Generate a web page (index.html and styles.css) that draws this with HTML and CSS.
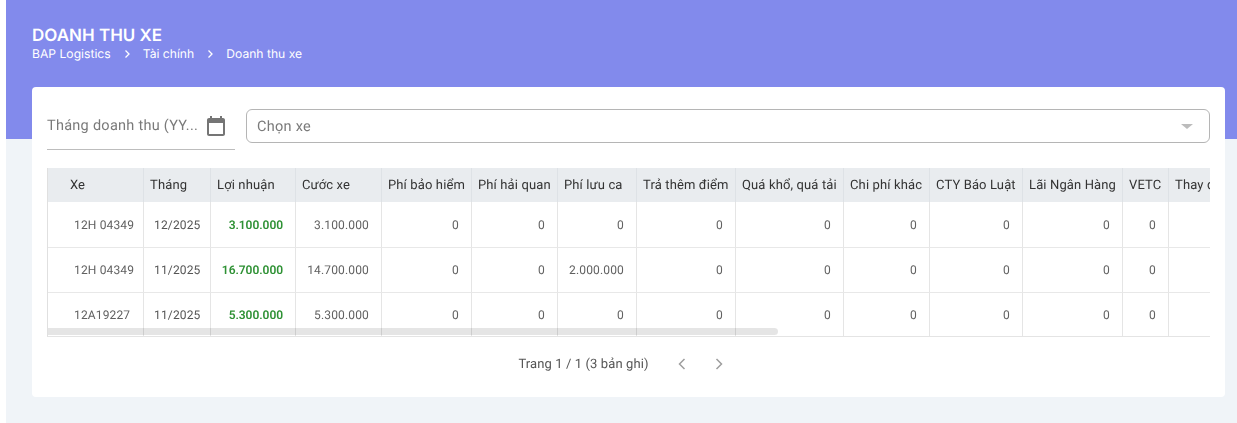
FILE: index.html
```html
<!DOCTYPE html>
<html lang="vi">
<head>
<meta charset="utf-8">
<title>Doanh thu xe</title>
<link rel="stylesheet" href="styles.css">
</head>
<body>
<div class="banner">
  <h1 class="title">DOANH THU XE</h1>
  <nav class="crumbs">
    <span>BAP Logistics</span>
    <svg class="crumb-sep" viewBox="0 0 8 10"><path d="M2.5 1.5 6 5 2.5 8.500" fill="none" stroke="#fff" stroke-width="1.3"/></svg>
    <span>Tài chính</span>
    <svg class="crumb-sep" viewBox="0 0 8 10"><path d="M2.5 1.5 6 5 2.5 8.500" fill="none" stroke="#fff" stroke-width="1.3"/></svg>
    <span>Doanh thu xe</span>
  </nav>
</div>
<main class="card">
  <div class="filters">
    <div class="date-field">
      <span class="date-label">Tháng doanh thu (YY...</span>
      <svg class="cal" viewBox="0 0 24 24"><path fill="#757575" d="M19 3h-1V1h-2v2H8V1H6v2H5c-1.100 0-2 .9-2 2v14c0 1.100.9 2 2 2h14c1.100 0 2-.9 2-2V5c0-1.100-.9-2-2-2zm0 16H5V8h14v11z"/></svg>
    </div>
    <div class="select-field">
      <span class="select-label">Chọn xe</span>
      <span class="select-caret"></span>
    </div>
  </div>
  <div class="table-wrap">
    <table class="grid">
      <colgroup>
        <col class="c96"><col class="c67"><col class="c85"><col class="c86"><col class="c90"><col class="c86"><col class="c79"><col class="c99"><col class="c108"><col class="c86"><col class="c93"><col class="c100"><col class="c46"><col class="c100">
      </colgroup>
      <thead>
        <tr><th class="first">Xe</th><th>Tháng</th><th>Lợi nhuận</th><th>Cước xe</th><th>Phí bảo hiểm</th><th>Phí hải quan</th><th>Phí lưu ca</th><th>Trả thêm điểm</th><th>Quá khổ, quá tải</th><th>Chi phí khác</th><th>CTY Báo Luật</th><th>Lãi Ngân Hàng</th><th>VETC</th><th>Thay dầu</th></tr>
      </thead>
      <tbody>
        <tr><td class="plate">12H 04349</td><td class="month">12/2025</td><td class="profit">3.100.000</td><td>3.100.000</td><td>0</td><td>0</td><td>0</td><td>0</td><td>0</td><td>0</td><td>0</td><td>0</td><td>0</td><td></td></tr>
        <tr><td class="plate">12H 04349</td><td class="month">11/2025</td><td class="profit">16.700.000</td><td>14.700.000</td><td>0</td><td>0</td><td>2.000.000</td><td>0</td><td>0</td><td>0</td><td>0</td><td>0</td><td>0</td><td></td></tr>
        <tr><td class="plate">12A19227</td><td class="month">11/2025</td><td class="profit">5.300.000</td><td>5.300.000</td><td>0</td><td>0</td><td>0</td><td>0</td><td>0</td><td>0</td><td>0</td><td>0</td><td>0</td><td></td></tr>
      </tbody>
    </table>
    <div class="scroll-thumb"></div>
  </div>
  <div class="pager">
    <span class="pager-text">Trang 1 / 1 (3 bản ghi)</span>
    <svg class="pager-icon" viewBox="0 0 24 24"><path fill="none" stroke="#9e9e9e" stroke-width="1.8" d="M15 6l-6 6 6 6"/></svg>
    <svg class="pager-icon" viewBox="0 0 24 24"><path fill="none" stroke="#9e9e9e" stroke-width="1.800" d="M9 6l6 6-6 6"/></svg>
  </div>
</main>
</body>
</html>
```
FILE: styles.css
```css
* { box-sizing: border-box; }
html, body { margin: 0; height: 423px; overflow: hidden; }
html { text-rendering: geometricPrecision; }
body { background: #f0f4f8; font-family: Roboto, sans-serif; color: #333; border-left: 6px solid #fff; }
.banner { background: #828aec; height: 139px; margin-left: -6px; padding: 26px 0 0 32px; color: #fff; }
.title { margin: 0; font: 600 17px/20px Inter, sans-serif; }
.crumbs { display: flex; align-items: center; font: 400 12.15px/15px Inter, sans-serif; }
.crumb-sep { width: 8px; height: 10px; margin: 0 12px; }
.card { background: #fff; border-radius: 4px; margin: -52px 12px 0 26px; padding: 22px 15px 0; height: 310px; will-change: transform; }
.filters { display: flex; gap: 11px; }
.date-field { width: 188px; height: 41px; border-bottom: 1px solid #bdbdbd; display: flex; align-items: flex-start; justify-content: space-between; padding-top: 6px; }
.date-label { font-size: 14.5px; line-height: 20px; color: #7a7a7a; white-space: nowrap; letter-spacing: .27px; margin-top: 1px; }
.cal { width: 24px; height: 24px; margin-right: 7px; }
.select-field { flex: 1; height: 34px; border: 1px solid #b5b5b5; border-radius: 6px; display: flex; align-items: center; justify-content: space-between; padding: 0 16px 0 10px; }
.select-label { font-size: 14.5px; color: #7a7a7a; letter-spacing: .27px; }
.select-caret { width: 0; height: 0; border-left: 6px solid transparent; border-right: 6px solid transparent; border-top: 5px solid #bcbcbc; }
.table-wrap { position: relative; overflow: hidden; margin-top: 18px; height: 169px; border-left: 1px solid #e0e0e0; border-bottom: 1px solid #e4e4e4; }
.grid { table-layout: fixed; width: 1221px; border-collapse: separate; border-spacing: 0; font-size: 12px; letter-spacing: .15px; }
.c96 { width: 96px; } .c67 { width: 67px; } .c85 { width: 85px; } .c86 { width: 86px; } .c90 { width: 90px; } .c79 { width: 79px; } .c99 { width: 99px; } .c108 { width: 108px; } .c93 { width: 93px; } .c100 { width: 100px; } .c46 { width: 46px; }
th { height: 34px; background: #e9ecef; border-right: 1px solid #dee2e6; font-weight: 400; color: #333; text-align: left; padding: 0 6px; white-space: nowrap; overflow: hidden; font-size: 13px; letter-spacing: .13px; }
th.first { padding-left: 22px; }
td { height: 45px; border-right: 1px solid #e5e5e5; border-bottom: 1px solid #e8e8e8; text-align: right; padding: 0 12px 0 6px; color: #616161; white-space: nowrap; }
tbody tr:first-child td { height: 46px; }
td.plate { text-align: left; padding-left: 26px; }
td.month { text-align: left; padding-left: 10px; color: #555; }
td.profit { color: #2e9134; font-weight: 600; letter-spacing: -.05px; }
.scroll-thumb { position: absolute; left: 0; top: 160px; width: 730px; height: 7px; border-radius: 0 4px 4px 0; background: rgba(0,0,0,.1); }
.pager { display: flex; align-items: center; justify-content: center; gap: 17px; margin-top: 17px; padding-right: 10px; font-size: 13px; letter-spacing: .1px; color: #555; }
.pager-text { margin-right: 6px; }
.pager-icon { width: 20px; height: 20px; }
```
